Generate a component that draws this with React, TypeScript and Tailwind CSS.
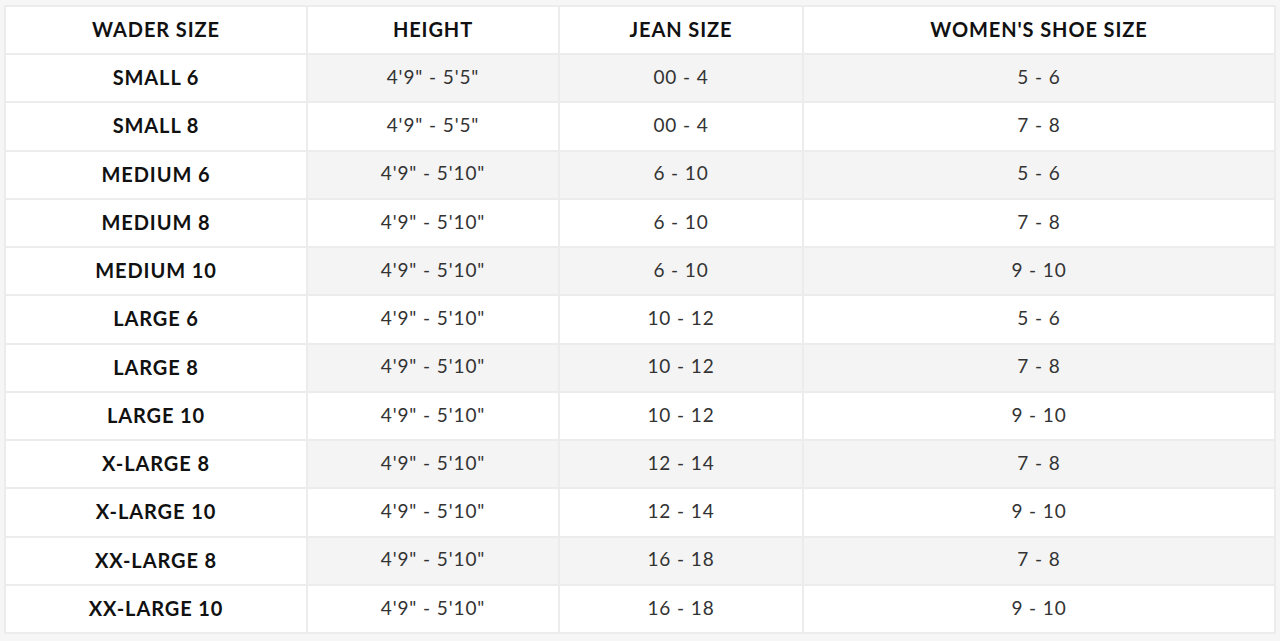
import React from "react";

const rows: [string, string, string, string][] = [
  ["SMALL 6", `4'9" - 5'5"`, "00 - 4", "5 - 6"],
  ["SMALL 8", `4'9" - 5'5"`, "00 - 4", "7 - 8"],
  ["MEDIUM 6", `4'9" - 5'10"`, "6 - 10", "5 - 6"],
  ["MEDIUM 8", `4'9" - 5'10"`, "6 - 10", "7 - 8"],
  ["MEDIUM 10", `4'9" - 5'10"`, "6 - 10", "9 - 10"],
  ["LARGE 6", `4'9" - 5'10"`, "10 - 12", "5 - 6"],
  ["LARGE 8", `4'9" - 5'10"`, "10 - 12", "7 - 8"],
  ["LARGE 10", `4'9" - 5'10"`, "10 - 12", "9 - 10"],
  ["X-LARGE 8", `4'9" - 5'10"`, "12 - 14", "7 - 8"],
  ["X-LARGE 10", `4'9" - 5'10"`, "12 - 14", "9 - 10"],
  ["XX-LARGE 8", `4'9" - 5'10"`, "16 - 18", "7 - 8"],
  ["XX-LARGE 10", `4'9" - 5'10"`, "16 - 18", "9 - 10"],
];

export default function App() {
  return (
    <div
      className="w-[1280px] h-[641px] bg-[#f6f6f6] pt-[5px] pl-[4px]"
      style={{ fontFamily: "Lato, 'Open Sans', sans-serif" }}
    >
      <table className="border-collapse table-fixed w-[1270px] bg-white border-2 border-[#e6e6e6]">
        <colgroup>
          <col className="w-[302px]" />
          <col className="w-[252px]" />
          <col className="w-[244px]" />
          <col className="w-[472px]" />
        </colgroup>
        <thead>
          <tr className="h-[48px]">
            {["WADER SIZE", "HEIGHT", "JEAN SIZE", "WOMEN'S SHOE SIZE"].map((h) => (
              <th
                key={h}
                className="border-2 border-[#ececec] text-center text-[20px] font-bold text-[#111] tracking-[0.9px] pb-[2px]"
              >
                {h}
              </th>
            ))}
          </tr>
        </thead>
        <tbody>
          {rows.map((r, i) => {
            const striped = i % 2 === 0;
            return (
              <tr key={r[0]} className="h-[48.25px]">
                <td className="border-2 border-[#ececec] text-center text-[20px] font-bold text-[#111] bg-white tracking-[0.9px] pb-[2px]">
                  {r[0]}
                </td>
                {r.slice(1).map((c, j) => (
                  <td
                    key={j}
                    className={`border-2 border-[#ececec] text-center text-[19px] text-[#333] tracking-[0.9px] pb-[2px] ${
                      striped ? "bg-[#f4f4f4]" : "bg-white"
                    }`}
                  >
                    {c}
                  </td>
                ))}
              </tr>
            );
          })}
        </tbody>
      </table>
    </div>
  );
}
